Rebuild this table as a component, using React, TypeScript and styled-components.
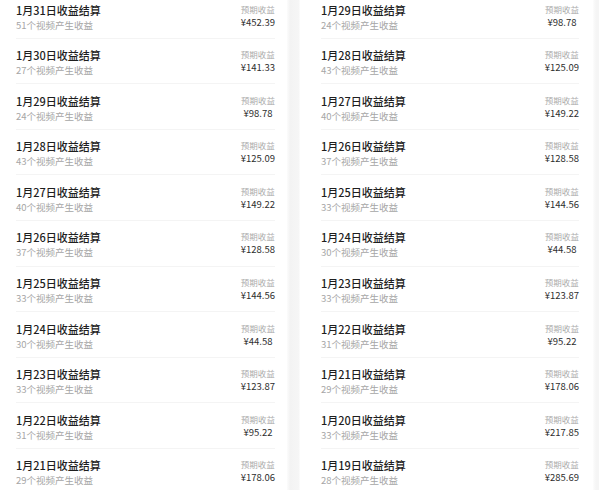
import React from "react";
import styled, { createGlobalStyle } from "styled-components";

const Global = createGlobalStyle`
  html, body { margin: 0; padding: 0; background: #f3f3f3; }
  body { font-family: "Noto Sans CJK SC", "Noto Sans", sans-serif; overflow: hidden; }
`;

const Page = styled.div`
  display: flex;
  width: 599px;
  height: 490px;
  overflow: hidden;
  background: linear-gradient(90deg, #ffffff 0, #ffffff 286px, #f3f3f3 290px, #f6f6f6 299px, #ffffff 300px, #ffffff 592px, #f5f5f5 596px);
`;

const Panel = styled.div<{ $w: number; $pl: number; $pr: number; $gap: number }>`
  width: ${(p) => p.$w}px;
  margin-right: ${(p) => p.$gap}px;
  padding-left: ${(p) => p.$pl}px;
  padding-right: ${(p) => p.$pr}px;
  box-sizing: border-box;
  background: #ffffff;
  flex-shrink: 0;
`;

const List = styled.div`
  display: flex;
  flex-direction: column;
  margin-top: -7px;
`;

const Row = styled.div`
  display: flex;
  justify-content: space-between;
  align-items: flex-start;
  height: 45.6px;
  box-sizing: border-box;
  padding-top: 8.5px;
  border-bottom: 1px solid #f4f4f4;
`;

const Left = styled.div`
  display: flex;
  flex-direction: column;
`;

const Title = styled.div`
  font-size: 11px;
  line-height: 16px;
  color: #1e1e1e;
  font-weight: 500;
  white-space: nowrap;
`;

const Sub = styled.div`
  font-size: 9.5px;
  line-height: 14px;
  color: #a6a6a6;
  white-space: nowrap;
`;

const Right = styled.div`
  display: flex;
  flex-direction: column;
  align-items: center;
  padding-top: 1px;
`;

const Label = styled.div`
  font-size: 8.5px;
  line-height: 13px;
  color: #ababab;
  white-space: nowrap;
`;

const Amount = styled.div`
  font-size: 9.5px;
  line-height: 13px;
  color: #2e2e2e;
  white-space: nowrap;
`;

type Item = { d: number; n: number; v: string };

const leftData: Item[] = [
  { d: 31, n: 51, v: "452.39" },
  { d: 30, n: 27, v: "141.33" },
  { d: 29, n: 24, v: "98.78" },
  { d: 28, n: 43, v: "125.09" },
  { d: 27, n: 40, v: "149.22" },
  { d: 26, n: 37, v: "128.58" },
  { d: 25, n: 33, v: "144.56" },
  { d: 24, n: 30, v: "44.58" },
  { d: 23, n: 33, v: "123.87" },
  { d: 22, n: 31, v: "95.22" },
  { d: 21, n: 29, v: "178.06" },
];

const rightData: Item[] = [
  { d: 29, n: 24, v: "98.78" },
  { d: 28, n: 43, v: "125.09" },
  { d: 27, n: 40, v: "149.22" },
  { d: 26, n: 37, v: "128.58" },
  { d: 25, n: 33, v: "144.56" },
  { d: 24, n: 30, v: "44.58" },
  { d: 23, n: 33, v: "123.87" },
  { d: 22, n: 31, v: "95.22" },
  { d: 21, n: 29, v: "178.06" },
  { d: 20, n: 33, v: "217.85" },
  { d: 19, n: 28, v: "285.69" },
];

const Items = ({ data }: { data: Item[] }) => (
  <List>
    {data.map((it) => (
      <Row key={it.d}>
        <Left>
          <Title>1月{it.d}日收益结算</Title>
          <Sub>{it.n}个视频产生收益</Sub>
        </Left>
        <Right>
          <Label>预期收益</Label>
          <Amount>¥{it.v}</Amount>
        </Right>
      </Row>
    ))}
  </List>
);

export default function App() {
  return (
    <>
      <Global />
      <Page>
        <Panel $w={287} $pl={16} $pr={12} $gap={13}>
          <Items data={leftData} />
        </Panel>
        <Panel $w={293} $pl={21} $pr={14} $gap={0}>
          <Items data={rightData} />
        </Panel>
      </Page>
    </>
  );
}
